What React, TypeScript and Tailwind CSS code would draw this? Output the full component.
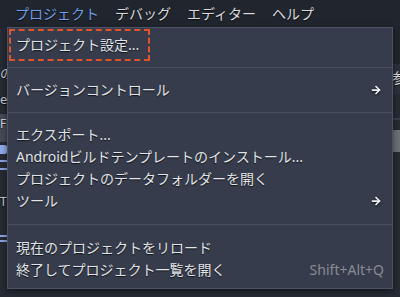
import { ArrowRight } from 'lucide-react';

type Item =
  | { kind: 'item'; label: string; submenu?: boolean; shortcut?: string }
  | { kind: 'sep'; h: string };

const items: Item[] = [
  { kind: 'item', label: 'プロジェクト設定...' },
  { kind: 'sep', h: 'h-[23px]' },
  { kind: 'item', label: 'バージョンコントロール', submenu: true },
  { kind: 'sep', h: 'h-[23px]' },
  { kind: 'item', label: 'エクスポート...' },
  { kind: 'item', label: 'Androidビルドテンプレートのインストール...' },
  { kind: 'item', label: 'プロジェクトのデータフォルダーを開く' },
  { kind: 'item', label: 'ツール', submenu: true },
  { kind: 'sep', h: 'h-[25px]' },
  { kind: 'item', label: '現在のプロジェクトをリロード' },
  { kind: 'item', label: '終了してプロジェクト一覧を開く', shortcut: 'Shift+Alt+Q' },
];

const menuBar = ['プロジェクト', 'デバッグ', 'エディター', 'ヘルプ'];

export default function App() {
  return (
    <div
      className="relative w-[400px] h-[297px] overflow-hidden bg-[#252a33] text-[14px] [text-shadow:0_1px_1px_rgba(0,0,0,0.7)]"
      style={{ fontFamily: '"Noto Sans", "Noto Sans CJK JP", sans-serif' }}
    >
      {/* top menu bar */}
      <div className="flex h-[28px] items-center gap-[16px] bg-[#21252d] pl-[15px] leading-none">
        {menuBar.map((m, i) => (
          <span key={m} className={i === 0 ? 'text-[#6f9fe8]' : 'text-[#d8dadf]'}>
            {m}
          </span>
        ))}
      </div>

      {/* editor content peeking out behind the popup */}
      <div className="flex">
        <div className="flex w-[8px] flex-col">
          <div className="h-[38px]" />
          <div className="h-[14px] overflow-hidden text-[13px] leading-[14px] text-[#c9ccd2]">の</div>
          <div className="h-[12px]" />
          <div className="h-[14px] overflow-hidden text-[13px] leading-[14px] text-[#c9ccd2]">e</div>
          <div className="h-[8px]" />
          <div className="h-[28px] bg-[#454b56] pt-[3px] text-[12px] leading-[14px] text-[#d0d2d6]">F</div>
          <div className="h-[3px]" />
          <div className="h-[9px] rounded-r-sm bg-[#8fa8e8]" />
          <div className="h-[6px]" />
          <div className="h-[2px] bg-[#8aa2e0]" />
          <div className="h-[6px]" />
          <div className="h-[2px] bg-[#8aa2e0]" />
          <div className="h-[25px]" />
          <div className="h-[14px] text-[12px] leading-[14px] text-[#c9ccd2]">T</div>
          <div className="h-[26px]" />
          <div className="h-[2px] bg-[#8aa2e0]" />
          <div className="h-[3px]" />
          <div className="h-[2px] bg-[#8aa2e0]" />
        </div>
        <div className="w-[384px]" />
        <div className="flex w-[8px] flex-col">
          <div className="h-[36px] bg-[#21252d]" />
          <div className="h-[30px] overflow-hidden bg-[#2c313b] pt-[6px] text-[14px] leading-[16px] text-[#e0e2e6]">参</div>
          <div className="h-[24px] bg-[#262a33]" />
          <div className="h-[2px] bg-[#3a404b]" />
          <div className="h-[10px]" />
          <div className="h-[22px] bg-[#6c7079]" />
        </div>
      </div>

      {/* popup menu */}
      <div className="absolute left-[7px] top-[27px] w-[386px] border border-[#4d5364] bg-[#363c4b] px-[8px] pb-[7px] pt-[6px] shadow-[0_2px_6px_rgba(0,0,0,0.5)]">
        {items.map((it, i) =>
          it.kind === 'sep' ? (
            <div key={i} className={`${it.h} flex items-center -mx-[8px]`}>
              <div className="h-px w-full bg-[#4a5060]" />
            </div>
          ) : (
            <div key={i} className="flex h-[22px] items-center justify-between leading-none text-[#e1e4e9]">
              <span>{it.label}</span>
              {it.submenu && (
                <ArrowRight size={12} strokeWidth={3.5} className="mr-[2px] text-[#eef0f3] drop-shadow-[0_1px_1px_rgba(0,0,0,0.8)]" />
              )}
              {it.shortcut && (
                <span className="text-[14px] text-[#868b95] [text-shadow:none]">{it.shortcut}</span>
              )}
            </div>
          )
        )}
      </div>

      {/* highlight annotation */}
      <div className="absolute left-[9px] top-[29px] h-[32px] w-[141px] border-2 border-dashed border-[#e2522b]" />
    </div>
  );
}
